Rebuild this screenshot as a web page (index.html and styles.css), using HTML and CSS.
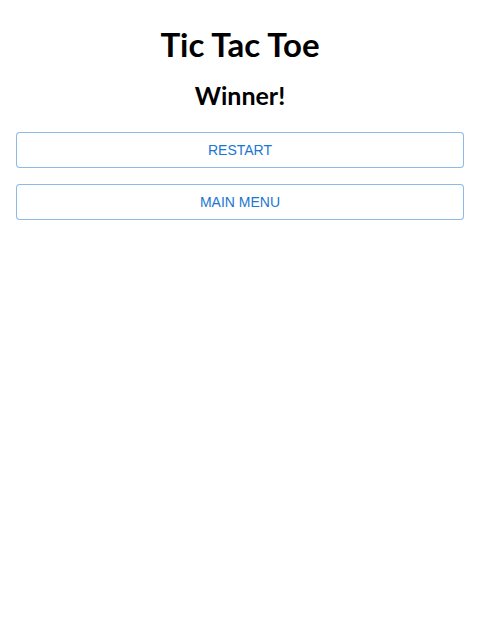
FILE: index.html
```html
<!DOCTYPE html>
<html>
<head>
<meta charset="utf-8">
<link rel="stylesheet" href="styles.css">
</head>
<body>
<div class="app">
  <h1 class="title">Tic Tac Toe</h1>
  <h2 class="status">Winner!</h2>
  <div class="actions">
    <button class="btn">RESTART</button>
    <button class="btn">MAIN MENU</button>
  </div>
</div>
</body>
</html>
```

FILE: styles.css
```css
html, body {
  margin: 0;
  padding: 0;
  background: #fff;
}
.app {
  padding: 16px;
  display: flex;
  flex-direction: column;
  align-items: stretch;
}
.title {
  margin: 8px 0 0 0;
  font-family: Lato, "Noto Sans", sans-serif;
  font-weight: 700;
  font-size: 33px;
  line-height: 40px;
  text-align: center;
  color: #000;
}
.status {
  margin: 16px 0 0 0;
  font-family: Lato, "Noto Sans", sans-serif;
  font-weight: 700;
  font-size: 25px;
  line-height: 30px;
  text-align: center;
  color: #000;
}
.actions {
  margin-top: 22px;
  display: flex;
  flex-direction: column;
  gap: 16px;
}
.btn {
  height: 36px;
  background: #fff;
  border: 1px solid rgba(25, 118, 210, 0.5);
  border-radius: 4px;
  color: #1976d2;
  font-family: "Liberation Sans", Arial, sans-serif;
  font-weight: 400;
  font-size: 14px;
  padding: 5px 15px;
}
```
